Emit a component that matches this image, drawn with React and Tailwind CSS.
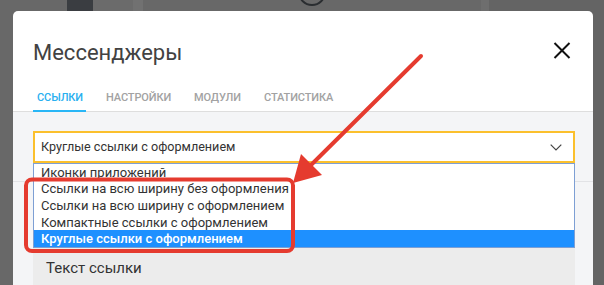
import React from "react";

const tabs = [
  { label: "ССЫЛКИ", w: "w-[53px]", active: true },
  { label: "НАСТРОЙКИ", w: "w-[72px]" },
  { label: "МОДУЛИ", w: "w-[54px]" },
  { label: "СТАТИСТИКА", w: "w-[80px]" },
];

const options = [
  "Иконки приложений",
  "Ссылки на всю ширину без оформления",
  "Ссылки на всю ширину с оформлением",
  "Компактные ссылки с оформлением",
  "Круглые ссылки с оформлением",
];

export default function App() {
  return (
    <div className="relative w-[604px] h-[285px] overflow-hidden bg-[#686868] font-['Roboto',sans-serif]">
      {/* background page behind the dialog */}
      <div className="flex h-[285px]">
        <div className="w-[67px]" />
        <div className="w-[26px]">
          <div className="h-[11px] bg-[#3a3d41]" />
        </div>
        <div className="w-[40px] bg-[#6b6b6b]" />
        <div className="w-[10px] bg-[#717171]" />
        <div className="flex-1 pl-[155px]">
          <div className="mt-[-22px] w-[28px] h-[28px] rounded-full border-2 border-[#2a2d30]" />
        </div>
        <div className="w-[8px] bg-[#6e6e6e]" />
        <div className="w-[115px] bg-[#646464]" />
      </div>

      {/* modal dialog */}
      <div className="absolute left-[13px] top-[11px] w-[580px] h-[274px] bg-white rounded-t-[5px] overflow-hidden">
        <div className="flex justify-between items-start pl-[20px] pr-[22px] pt-[29px]">
          <div className="text-[22px] leading-[26px] text-[#424242]">Мессенджеры</div>
          <svg width="18" height="17" viewBox="0 0 18 17" className="mt-[2px]">
            <line x1="1.5" y1="1" x2="16.5" y2="16" stroke="#111" strokeWidth="2" />
            <line x1="16.5" y1="1" x2="1.5" y2="16" stroke="#111" strokeWidth="2" />
          </svg>
        </div>

        <div className="mt-[24px] flex gap-[16px] px-[20px] border-b border-[#dedede]">
          {tabs.map((t) => (
            <div
              key={t.label}
              className={`${t.w} h-[22px] -mb-px pl-[4px] pt-[1px] border-b-2 text-[11px] leading-[13px] font-medium tracking-[-0.1px] whitespace-nowrap ${
                t.active ? "border-[#29b6f6] text-[#29b0f0]" : "border-transparent text-[#a2a2a2]"
              }`}
            >
              {t.label}
            </div>
          ))}
        </div>

        <div className="bg-[#f4f5f7] h-[70px] pt-[19px] pl-[20px] pr-[18px] border-b border-[#e2e3e6]">
          <div className="h-[32px] border-2 border-[#fbc02d] bg-white flex items-center justify-between pl-[6px] pr-[11px]">
            <span className="text-[12.6px] text-[#333]">Круглые ссылки с оформлением</span>
            <svg width="12" height="7" viewBox="0 0 12 7">
              <polyline points="0.7,0.7 6,6 11.3,0.7" fill="none" stroke="#444" strokeWidth="1.2" />
            </svg>
          </div>
        </div>

        <div className="bg-[#f4f5f7] h-[200px] pt-[65px] pl-[20px] pr-[18px]">
          <div className="bg-[#ececec] h-[40px] pl-[13px] pt-[13px] text-[15px] leading-[17px] text-[#333]">
            Текст ссылки
          </div>
        </div>

        {/* open dropdown list */}
        <div className="absolute left-[20px] top-[152px] w-[542px] h-[85px] border border-[#7d9fd4] bg-white flex flex-col">
          {options.map((o, i) => {
            const sel = i === options.length - 1;
            return (
              <div
                key={o}
                className={`h-[16.6px] flex items-center pl-[7px] text-[13px] leading-[15px] whitespace-nowrap ${
                  sel ? "bg-[#1e90ff] text-white font-medium" : "text-[#333]"
                }`}
              >
                {o}
              </div>
            );
          })}
        </div>
      </div>

      {/* red annotation */}
      <svg className="absolute inset-0 pointer-events-none" width="604" height="285" viewBox="0 0 604 285">
        <rect x="26" y="179.5" width="267" height="71.5" rx="6" fill="none" stroke="#e53b2f" strokeWidth="4" />
        <line x1="421" y1="56" x2="308" y2="168" stroke="#e53b2f" strokeWidth="4" strokeLinecap="round" />
        <polygon points="293,183 301,154 322,175" fill="#e53b2f" />
      </svg>
    </div>
  );
}
